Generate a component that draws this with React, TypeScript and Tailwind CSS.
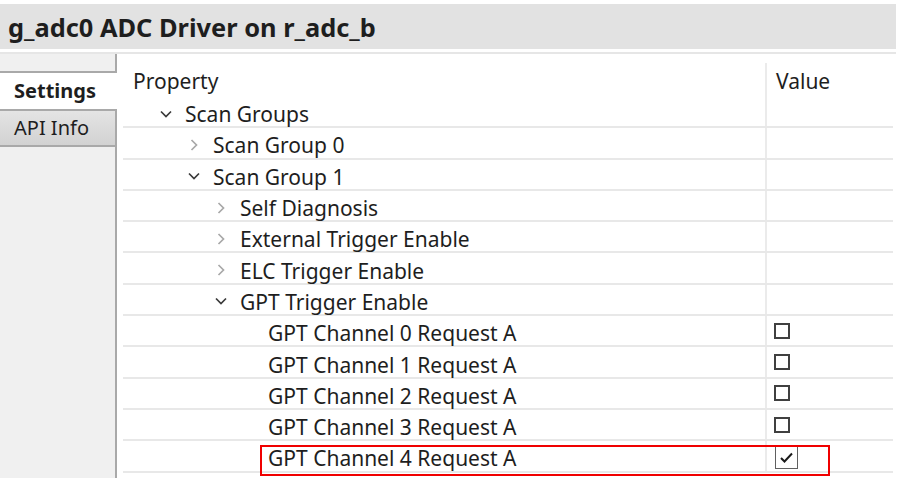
import React from "react";

type Row = {
  label: string;
  level: number;
  chev: "down" | "right" | null;
  value?: "off" | "on";
  highlight?: boolean;
};

const rows: Row[] = [
  { label: "Scan Groups", level: 0, chev: "down" },
  { label: "Scan Group 0", level: 1, chev: "right" },
  { label: "Scan Group 1", level: 1, chev: "down" },
  { label: "Self Diagnosis", level: 2, chev: "right" },
  { label: "External Trigger Enable", level: 2, chev: "right" },
  { label: "ELC Trigger Enable", level: 2, chev: "right" },
  { label: "GPT Trigger Enable", level: 2, chev: "down" },
  { label: "GPT Channel 0 Request A", level: 3, chev: null, value: "off" },
  { label: "GPT Channel 1 Request A", level: 3, chev: null, value: "off" },
  { label: "GPT Channel 2 Request A", level: 3, chev: null, value: "off" },
  { label: "GPT Channel 3 Request A", level: 3, chev: null, value: "off" },
  { label: "GPT Channel 4 Request A", level: 3, chev: null, value: "on", highlight: true },
];

const indent = ["pl-[37px]", "pl-[65px]", "pl-[92px]", "pl-[120px]"];

function Chevron({ dir }: { dir: "down" | "right" | null }) {
  return (
    <span className="w-[12px] h-[12px] mr-[13px] mt-[4px] flex items-center justify-center shrink-0">
      {dir === "down" && (
        <svg width="12" height="8" viewBox="0 0 12 8">
          <polyline points="1,1.5 6,6.5 11,1.5" fill="none" stroke="#3a3a3a" strokeWidth="1.7" />
        </svg>
      )}
      {dir === "right" && (
        <svg width="8" height="12" viewBox="0 0 8 12">
          <polyline points="1.5,1 6.5,6 1.5,11" fill="none" stroke="#a8a8a8" strokeWidth="1.7" />
        </svg>
      )}
    </span>
  );
}

function Check({ v }: { v?: "off" | "on" }) {
  if (!v) return null;
  if (v === "off")
    return <span className="block w-[16px] h-[16px] border-2 border-[#404040] bg-white shrink-0" />;
  return (
    <span className="flex items-center justify-center w-[23px] h-[23px] border-[1.5px] border-[#606060] bg-white mt-[4px] ml-[1px] shrink-0">
      <svg width="15" height="13" viewBox="0 0 15 13">
        <polyline points="2,7 5.5,10.5 13,2.5" fill="none" stroke="#1a1a1a" strokeWidth="2" />
      </svg>
    </span>
  );
}

export default function App() {
  return (
    <div
      className="w-[900px] h-[478px] bg-white overflow-hidden flex flex-col text-[#1e1e1e]"
      style={{ fontFamily: '"Noto Sans", "Open Sans", sans-serif' }}
    >
      <div className="pt-[4px] pr-[4px]">
        <div className="h-[45px] bg-[#e2e2e2] flex items-center pl-[8px]">
          <span className="text-[25.4px] font-bold leading-none mt-[2px]">g_adc0 ADC Driver on r_adc_b</span>
        </div>
      </div>
      <div className="h-[3px]" />
      <div className="h-[2px] bg-[#e6e6e6] mr-[4px]" />
      <div className="flex flex-1 min-h-0">
        {/* sidebar */}
        <div className="w-[117px] flex flex-col shrink-0">
          <div className="h-[19px] bg-[#f0f0f0] border-b-2 border-r-2 border-[#a9a9a9]" />
          <div className="h-[36px] bg-white flex items-center pl-[14px]">
            <span className="text-[20px] font-bold leading-none">Settings</span>
          </div>
          <div className="h-[38px] bg-gradient-to-b from-[#e4e4e4] to-[#d2d2d2] border-t-2 border-b-2 border-r-2 border-[#a9a9a9] flex items-center pl-[14px]">
            <span className="text-[20px] leading-none">API Info</span>
          </div>
          <div className="flex-1 bg-[#f0f0f0] border-r-2 border-[#a9a9a9]" />
        </div>
        {/* table */}
        <div className="flex-1 pl-[6px] pr-[7px] flex flex-col">
          <div className="h-[43px] flex">
            <div className="w-[642px] flex items-end pb-[5px] pl-[10px]">
              <span className="text-[21px] leading-none">Property</span>
            </div>
            <div className="flex-1 flex items-end pb-[5px] pl-[9px] border-l-2 border-[#ebebeb] mt-[9px]">
              <span className="text-[21px] leading-none">Value</span>
            </div>
          </div>
          {rows.map((r, i) => (
            <div key={i} className="h-[31.3px] flex border-b-2 border-[#e8e8e8] relative">
              <div className={"w-[642px] flex items-center " + indent[r.level]}>
                <Chevron dir={r.chev} />
                <span className="text-[21px] leading-none whitespace-nowrap pt-[6px]">{r.label}</span>
              </div>
              <div className="flex-1 flex items-center pl-[7px] border-l-2 border-[#ebebeb]">
                <Check v={r.value} />
              </div>
              {r.highlight && (
                <div className="absolute left-[137px] top-[4px] w-[570px] h-[31px] border-2 border-[#f00000] pointer-events-none" />
              )}
            </div>
          ))}
        </div>
      </div>
    </div>
  );
}
